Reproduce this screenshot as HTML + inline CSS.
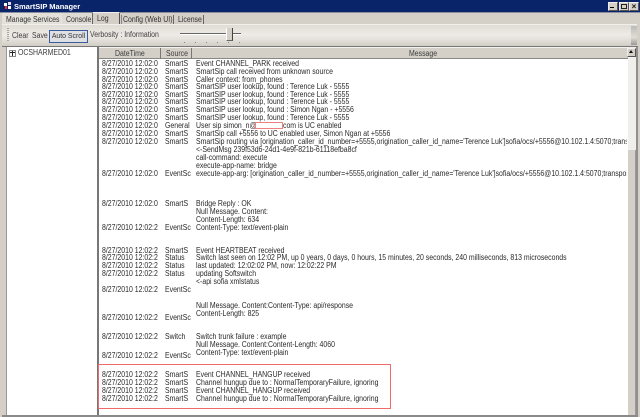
<!DOCTYPE html>
<html><head><meta charset="utf-8"><style>
html,body{margin:0;padding:0;width:640px;height:417px;overflow:hidden;background:#d4d0c8}
#w{position:relative;width:640px;height:417px;overflow:hidden;font-family:"Liberation Sans",sans-serif;font-size:7.8px;color:#2a2a2a;filter:blur(.3px)}
#w div{position:absolute;white-space:nowrap}
.r,.t,.l{transform:scaleX(.888);transform-origin:0 0}
.r{height:9px;line-height:9px}
.d{left:102px}.s{left:165px}.m{left:196px}
.t{top:14px;line-height:11px;color:#333}
.l{line-height:11px;color:#3c3c3c}
</style></head><body><div id="w">
<div style="left:0;top:0;width:640px;height:12px;background:#0a246a"></div>
<svg style="position:absolute;left:4px;top:2px" width="8" height="8"><rect x="0" y="1" width="3" height="3" fill="#fff"/><rect x="4" y="0" width="3" height="3" fill="#dde"/><rect x="1" y="4" width="2" height="3" fill="#e33"/><rect x="4" y="4" width="3" height="3" fill="#fff"/></svg>
<div style="left:14px;top:1px;color:#fff;font-weight:bold;line-height:11px;font-size:7.5px">SmartSIP Manager</div>
<div style="left:608px;top:2px;width:8px;height:7px;background:#d4d0c8;border:1px solid #555;border-color:#eee #555 #555 #eee"></div><div style="left:610px;top:7px;width:4px;height:1px;background:#000"></div>
<div style="left:619px;top:2px;width:8px;height:7px;background:#d4d0c8;border:1px solid #555;border-color:#eee #555 #555 #eee"></div><div style="left:621px;top:4px;width:4px;height:3px;border:1px solid #222"></div>
<div style="left:629px;top:2px;width:8px;height:7px;background:#d4d0c8;border:1px solid #555;border-color:#eee #555 #555 #eee;font-size:8px;line-height:7px;text-align:center;font-weight:bold;color:#111">×</div>
<div style="left:0;top:12px;width:640px;height:1px;background:#8a8f9e"></div>

<div style="left:2px;top:13px;width:60px;height:11px;background:#e4e1db;border-right:1px solid #666"></div>
<div class="t" style="left:6px">Manage Services</div>
<div style="left:62px;top:13px;width:30px;height:11px;background:#dedbd4;border-right:1px solid #666"></div>
<div class="t" style="left:66px">Console</div>
<div style="left:93px;top:12px;width:26px;height:13px;background:#d4d0c8;border-right:1px solid #555;border-top:1px solid #eee"></div>
<div class="t" style="left:97px;top:13px">Log</div>
<div style="left:121px;top:15px;width:51px;height:10px;border-left:1px solid #888;border-right:1px solid #666"></div>
<div class="t" style="left:123px">Config (Web UI)</div>
<div style="left:174px;top:15px;width:29px;height:10px;border-right:1px solid #666"></div>
<div class="t" style="left:178px">License</div>

<div style="left:2px;top:24px;width:635px;height:1px;background:#f2f0ec"></div>
<div style="left:2px;top:25px;width:635px;height:21px;background:linear-gradient(#dfdcd5,#eeeae6 45%,#e4e1db 70%,#d0cdc5)"></div>
<div style="left:7px;top:28px;width:2px;height:14px;background:repeating-linear-gradient(#a9a69e 0 1px,transparent 1px 2px)"></div>
<div class="l" style="left:12px;top:30px">Clear</div>
<div class="l" style="left:32px;top:30px">Save</div>
<div style="left:49px;top:30px;width:37px;height:11px;border:1px solid #3a5b9c;background:#dfe0e4;line-height:11px;text-align:center;font-size:6.9px;color:#333">Auto Scroll</div>
<div class="l" style="left:90px;top:29px">Verbosity : Information</div>
<div style="left:180px;top:33px;width:61px;height:1px;background:#666"></div>
<div style="left:180px;top:34px;width:61px;height:1px;background:#fff"></div>
<div style="left:226px;top:28px;width:5px;height:12px;background:#d4d0c8;border-right:1px solid #444;border-bottom:1px solid #666;border-left:1px solid #fff"></div>
<div style="left:184px;top:42px;width:56px;height:1px;background:repeating-linear-gradient(90deg,#888 0 1px,transparent 1px 11px)"></div>
<div style="left:631px;top:26px;width:6px;height:19px;background:linear-gradient(#bbb,#e0ddd6 60%,#999)"></div>

<div style="left:2px;top:46px;width:636px;height:1px;background:#777"></div>
<div style="left:6px;top:47px;width:90px;height:368px;background:#fff;border-left:1px solid #999"></div>
<div style="left:9px;top:50px;width:5px;height:5px;border:1px solid #888;background:#fff"></div>
<div style="left:10px;top:52px;width:5px;height:1px;background:#222"></div>
<div style="left:12px;top:51px;width:1px;height:5px;background:#222"></div>
<div class="l" style="left:18px;top:47px">OCSHARMED01</div>

<div style="left:97px;top:47px;width:2px;height:368px;background:#777"></div>
<div style="left:99px;top:47px;width:529px;height:368px;background:#fff"></div>
<div style="left:99px;top:47px;width:529px;height:12px;background:#d4d0c8;border-bottom:1px solid #888;box-sizing:border-box;border-top:1px solid #f4f2ee"></div>
<div style="left:160px;top:48px;width:1px;height:11px;background:#777"></div>
<div style="left:191px;top:48px;width:1px;height:11px;background:#777"></div>
<div class="l" style="left:115px;top:48px">DateTime</div>
<div class="l" style="left:166px;top:48px">Source</div>
<div class="l" style="left:409px;top:48px">Message</div>

<div style="left:628px;top:47px;width:8px;height:368px;background:#f1efeb"></div>
<div style="left:627px;top:48px;width:9px;height:9px;background:#d4d0c8;border:1px solid #555;border-color:#eee #555 #555 #eee;box-sizing:border-box"></div>
<div style="left:629px;top:50px;width:0;height:0;border:2.5px solid transparent;border-top:0;border-bottom:3px solid #111"></div>
<div style="left:628px;top:150px;width:8px;height:265px;background:#d4d0c8;border-right:1px solid #999;box-sizing:border-box"></div>
<div style="left:636px;top:47px;width:2px;height:368px;background:#8f8f8f"></div>
<div style="left:2px;top:415px;width:636px;height:2px;background:#8a8a8a"></div>

<div class="r d" style="top:59px">8/27/2010 12:02:0</div><div class="r s" style="top:59px">SmartS</div><div class="r m" style="top:59px">Event CHANNEL_PARK received</div>
<div class="r d" style="top:67px">8/27/2010 12:02:0</div><div class="r s" style="top:67px">SmartS</div><div class="r m" style="top:67px">SmartSip call received from unknown source</div>
<div class="r d" style="top:75px">8/27/2010 12:02:0</div><div class="r s" style="top:75px">SmartS</div><div class="r m" style="top:75px">Caller context: from_phones</div>
<div class="r d" style="top:82px">8/27/2010 12:02:0</div><div class="r s" style="top:82px">SmartS</div><div class="r m" style="top:82px">SmartSIP user lookup, found : Terence Luk - 5555</div>
<div class="r d" style="top:90px">8/27/2010 12:02:0</div><div class="r s" style="top:90px">SmartS</div><div class="r m" style="top:90px">SmartSIP user lookup, found : Terence Luk - 5555</div>
<div class="r d" style="top:97px">8/27/2010 12:02:0</div><div class="r s" style="top:97px">SmartS</div><div class="r m" style="top:97px">SmartSIP user lookup, found : Terence Luk - 5555</div>
<div class="r d" style="top:105px">8/27/2010 12:02:0</div><div class="r s" style="top:105px">SmartS</div><div class="r m" style="top:105px">SmartSIP user lookup, found : Simon Ngan - +5556</div>
<div class="r d" style="top:113px">8/27/2010 12:02:0</div><div class="r s" style="top:113px">SmartS</div><div class="r m" style="top:113px">SmartSIP user lookup, found : Terence Luk - 5555</div>
<div class="r d" style="top:121px">8/27/2010 12:02:0</div><div class="r s" style="top:121px">General</div><div class="r m" style="top:121px">User sip simon_n@</div><div class="r" style="left:283px;top:121px">com is UC enabled</div>
<div style="left:255px;top:122px;width:26px;height:5px;border:1px solid #f08080;background:#fff"></div>
<div class="r d" style="top:129px">8/27/2010 12:02:0</div><div class="r s" style="top:129px">SmartS</div><div class="r m" style="top:129px">SmartSip call +5556 to UC enabled user, Simon Ngan at +5556</div>
<div class="r d" style="top:137px">8/27/2010 12:02:0</div><div class="r s" style="top:137px">SmartS</div><div class="r m" style="top:137px;width:485px;overflow:hidden">SmartSip routing via [origination_caller_id_number=+5555,origination_caller_id_name='Terence Luk']sofia/ocs/+5556@10.102.1.4:5070;transport</div>
<div class="r m" style="top:145px">&lt;-SendMsg 239f53d6-24d1-4e9f-821b-61118efba8cf</div>
<div class="r m" style="top:153px">call-command: execute</div>
<div class="r m" style="top:161px">execute-app-name: bridge</div>
<div class="r d" style="top:169px">8/27/2010 12:02:0</div><div class="r s" style="top:169px">EventSc</div><div class="r m" style="top:169px;width:485px;overflow:hidden">execute-app-arg: [origination_caller_id_number=+5555,origination_caller_id_name='Terence Luk']sofia/ocs/+5556@10.102.1.4:5070;transport</div>

<div class="r d" style="top:199px">8/27/2010 12:02:0</div><div class="r s" style="top:199px">SmartS</div><div class="r m" style="top:199px">Bridge Reply : OK</div>
<div class="r m" style="top:207px">Null Message. Content:</div>
<div class="r m" style="top:215px">Content-Length: 634</div>
<div class="r d" style="top:223px">8/27/2010 12:02:2</div><div class="r s" style="top:223px">EventSc</div><div class="r m" style="top:223px">Content-Type: text/event-plain</div>

<div class="r d" style="top:246px">8/27/2010 12:02:2</div><div class="r s" style="top:246px">SmartS</div><div class="r m" style="top:246px">Event HEARTBEAT received</div>
<div class="r d" style="top:253px">8/27/2010 12:02:2</div><div class="r s" style="top:253px">Status</div><div class="r m" style="top:253px">Switch last seen on 12:02 PM, up 0 years, 0 days, 0 hours, 15 minutes, 20 seconds, 240 milliseconds, 813 microseconds</div>
<div class="r d" style="top:261px">8/27/2010 12:02:2</div><div class="r s" style="top:261px">Status</div><div class="r m" style="top:261px">last updated: 12:02:02 PM, now: 12:02:22 PM</div>
<div class="r d" style="top:269px">8/27/2010 12:02:2</div><div class="r s" style="top:269px">Status</div><div class="r m" style="top:269px">updating Softswitch</div>
<div class="r m" style="top:277px">&lt;-api sofia xmlstatus</div>
<div class="r d" style="top:285px">8/27/2010 12:02:2</div><div class="r s" style="top:285px">EventSc</div>

<div class="r m" style="top:301px">Null Message. Content:Content-Type: api/response</div>
<div class="r m" style="top:309px">Content-Length: 825</div>
<div class="r d" style="top:313px">8/27/2010 12:02:2</div><div class="r s" style="top:313px">EventSc</div>
<div class="r d" style="top:332px">8/27/2010 12:02:2</div><div class="r s" style="top:332px">Switch</div><div class="r m" style="top:332px">Switch trunk failure : example</div>
<div class="r m" style="top:340px">Null Message. Content:Content-Length: 4060</div>
<div class="r m" style="top:348px">Content-Type: text/event-plain</div>
<div class="r d" style="top:351px">8/27/2010 12:02:2</div><div class="r s" style="top:351px">EventSc</div>

<div class="r d" style="top:370px">8/27/2010 12:02:2</div><div class="r s" style="top:370px">SmartS</div><div class="r m" style="top:370px">Event CHANNEL_HANGUP received</div>
<div class="r d" style="top:378px">8/27/2010 12:02:2</div><div class="r s" style="top:378px">SmartS</div><div class="r m" style="top:378px">Channel hungup due to : NormalTemporaryFailure, ignoring</div>
<div class="r d" style="top:386px">8/27/2010 12:02:2</div><div class="r s" style="top:386px">SmartS</div><div class="r m" style="top:386px">Event CHANNEL_HANGUP received</div>
<div class="r d" style="top:394px">8/27/2010 12:02:2</div><div class="r s" style="top:394px">SmartS</div><div class="r m" style="top:394px">Channel hungup due to : NormalTemporaryFailure, ignoring</div>
<div style="left:98px;top:364px;width:291px;height:43px;border:1px solid #f06a6a"></div>
</div></body></html>
